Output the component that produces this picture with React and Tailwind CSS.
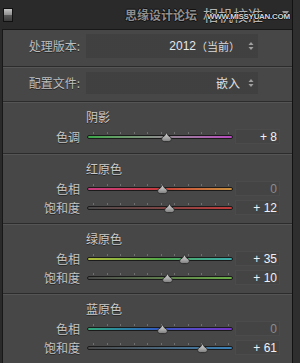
import React from "react";

const cjk = "font-['Noto_Sans_CJK_SC','Noto_Sans',sans-serif]";
const TICKS = [6, 19.5, 33, 46.5, 60, 73.5, 87, 100.5, 114, 127.5, 141];

function Thumb({ left }) {
  return (
    <svg
      className="absolute top-[5px]"
      style={{ left: left - 5.5 }}
      width="11"
      height="11"
      viewBox="0 0 11 11"
    >
      <defs>
        <linearGradient id="tg" x1="0" y1="0" x2="0" y2="1">
          <stop offset="0" stopColor="#d8d8d8" />
          <stop offset="0.6" stopColor="#a8a8a8" />
          <stop offset="1" stopColor="#7a7a7a" />
        </linearGradient>
      </defs>
      <path
        d="M5.5 0.6 L7.6 4 Q10.4 4.8 10.4 7.2 Q10.4 9.6 7.8 9.6 L3.2 9.6 Q0.6 9.6 0.6 7.2 Q0.6 4.8 3.4 4 Z"
        fill="url(#tg)"
        stroke="#2a2a2a"
        strokeWidth="0.9"
      />
    </svg>
  );
}

function SliderRow({ label, grad, thumb, value, zero }) {
  return (
    <div className="h-[19px] flex items-center">
      <div className={`w-[77px] text-right text-[12px] leading-none text-[#c4c4c4] [text-shadow:0_1px_0_#262626] ${cjk}`}>
        {label}
      </div>
      <div className="ml-[7px] w-[146px] h-full relative">
        {TICKS.map((t) => (
          <div key={t} className="absolute top-[5px] w-px h-[2px] bg-[#707070]" style={{ left: t }} />
        ))}
        <div className={`absolute top-[8px] left-0 right-0 h-[4px] rounded-full border border-[#1b1b1b] ${grad}`} />
        <Thumb left={thumb} />
      </div>
      <div className="ml-[2px] w-[45px] h-[15px] bg-[#444444] border border-[#4b4b4b] flex items-center justify-end pr-[2px]">
        <span
          className={`font-['Liberation_Sans',Arial,sans-serif] text-[12px] leading-none whitespace-pre ${
            zero ? "text-[#8c8c8c]" : "text-[#eef2f6]"
          }`}
        >
          {value}
        </span>
      </div>
    </div>
  );
}

function Sep() {
  return (
    <div className="flex flex-col">
      <div className="h-px bg-[#2c2c2c]" />
      <div className="h-px bg-[#555555]" />
    </div>
  );
}

function Header({ children }) {
  return (
    <div className={`h-[16px] ml-[83px] flex items-center text-[12px] leading-none text-[#cacaca] [text-shadow:0_1px_0_#262626] ${cjk}`}>
      {children}
    </div>
  );
}

function Arrows() {
  return (
    <svg width="6" height="10" viewBox="0 0 6 10" className="ml-[8px]">
      <path d="M3 1 L5.5 4 L0.5 4 Z" fill="#a0a0a0" />
      <path d="M3 9 L5.5 6 L0.5 6 Z" fill="#a0a0a0" />
    </svg>
  );
}

const field =
  "bg-[#434343] bg-[radial-gradient(#3d3d3d_0.6px,transparent_0.8px)] bg-[length:2px_2px]";

export default function App() {
  return (
    <div className="w-[300px] h-[363px] bg-[#2a2a2a] flex overflow-hidden">
      <div className="w-[292px] flex flex-col">
        {/* top bar */}
        <div className="h-[29px] relative flex items-center pl-[3px] pr-[3px]">
          <div className="w-[10px] h-[14px] border border-[#111] flex flex-col">
            <div className="h-[6px] bg-gradient-to-b from-[#c4c4c4] to-[#8e8e8e]" />
            <div className="flex-1 bg-gradient-to-b from-[#5a5a5a] to-[#3c3c3c]" />
          </div>
          <span className={`ml-auto text-[12px] leading-none font-bold text-[#8e8e8e] [text-shadow:1px_0_0_#111,-1px_0_0_#111,0_1px_0_#111,0_-1px_0_#111] ${cjk}`}>
            思缘设计论坛
          </span>
          <span className={`ml-[6px] text-[15px] leading-none text-[#b4b4b4] [text-shadow:0_1px_0_#111] ${cjk}`}>
            相机校准
          </span>
          <svg width="7" height="6" viewBox="0 0 7 6" className="ml-[19px] mt-[-2px]">
            <path d="M0 0 L7 0 L3.5 5 Z" fill="#9a9a9a" />
          </svg>
          <span className="absolute left-[207px] top-[13px] font-['Liberation_Sans',Arial,sans-serif] font-bold text-[8px] leading-none tracking-[-0.3px] text-[#d4d4d4] [text-shadow:1px_0_0_#111,-1px_0_0_#111,0_1px_0_#111,0_-1px_0_#111]">
            WWW.MISSYUAN.COM
          </span>
        </div>

        {/* panel */}
        <div className="flex-1 ml-[2px] border-l border-t border-[#181818] bg-[#474747] flex flex-col">
          {/* 处理版本 */}
          <div className="h-[36px] pt-[4px] flex items-start">
            <div className={`w-[77px] h-[24px] flex items-center justify-end text-[12px] leading-none text-[#bdbdbd] [text-shadow:0_1px_0_#262626] ${cjk}`}>
              处理版本:
            </div>
            <div className={`ml-[6px] w-[172px] h-[24px] flex items-center justify-end pr-[4px] ${field}`}>
              <span className="font-['Liberation_Sans',Arial,sans-serif] text-[12px] leading-none text-[#e6e9ee]">2012</span>
              <span className={`text-[11px] leading-none text-[#dcdcdc] ${cjk}`}>（当前）</span>
              <Arrows />
            </div>
          </div>
          <Sep />
          {/* 配置文件 */}
          <div className="h-[33px] pt-[4px] flex items-start">
            <div className={`w-[77px] h-[22px] flex items-center justify-end text-[12px] leading-none text-[#bdbdbd] [text-shadow:0_1px_0_#262626] ${cjk}`}>
              配置文件:
            </div>
            <div className={`ml-[6px] w-[172px] h-[22px] flex items-center justify-end pr-[4px] ${field}`}>
              <span className={`text-[12px] leading-none text-[#e2e2e2] ${cjk}`}>嵌入</span>
              <Arrows />
            </div>
          </div>
          <Sep />
          {/* 阴影 */}
          <div className="h-[50px] pt-[6px] flex flex-col">
            <Header>阴影</Header>
            <div className="mt-[2px]">
              <SliderRow
                label="色调"
                grad="bg-gradient-to-r from-[#38a848] via-[#8c8c8c] to-[#b848c0]"
                thumb={79}
                value="+ 8"
              />
            </div>
          </div>
          <Sep />
          {/* 红原色 */}
          <div className="h-[68px] pt-[6px] flex flex-col">
            <Header>红原色</Header>
            <div className="mt-[2px]">
              <SliderRow
                label="色相"
                grad="bg-gradient-to-r from-[#c83c80] via-[#c83a3a] to-[#c8903e]"
                thumb={75}
                value="0"
                zero
              />
              <SliderRow
                label="饱和度"
                grad="bg-gradient-to-r from-[#4a4a4a] via-[#7a4444] to-[#c03a3a]"
                thumb={82}
                value="+ 12"
              />
            </div>
          </div>
          <Sep />
          {/* 绿原色 */}
          <div className="h-[68px] pt-[6px] flex flex-col">
            <Header>绿原色</Header>
            <div className="mt-[2px]">
              <SliderRow
                label="色相"
                grad="bg-gradient-to-r from-[#b0bc3a] via-[#52a848] to-[#3aacac]"
                thumb={97}
                value="+ 35"
              />
              <SliderRow
                label="饱和度"
                grad="bg-gradient-to-r from-[#4a4a4a] via-[#5e7a4c] to-[#6cae48]"
                thumb={80}
                value="+ 10"
              />
            </div>
          </div>
          <Sep />
          {/* 蓝原色 */}
          <div className="flex-1 pt-[6px] flex flex-col">
            <Header>蓝原色</Header>
            <div className="mt-[2px]">
              <SliderRow
                label="色相"
                grad="bg-gradient-to-r from-[#34a878] via-[#3456c4] to-[#7434c4]"
                thumb={75}
                value="0"
                zero
              />
              <SliderRow
                label="饱和度"
                grad="bg-gradient-to-r from-[#4a4a4a] via-[#4a6478] to-[#3a82b8]"
                thumb={115}
                value="+ 61"
              />
            </div>
          </div>
        </div>
      </div>
      <div className="w-px bg-[#121212]" />
      <div className="flex-1 bg-[#2e2e2e]" />
    </div>
  );
}
